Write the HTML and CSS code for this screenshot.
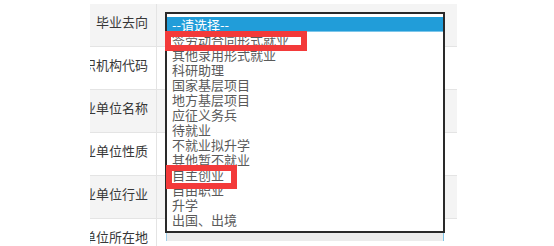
FILE: index.html
```html
<!DOCTYPE html>
<html lang="zh">
<head>
<meta charset="utf-8">
<link rel="stylesheet" href="styles.css">
</head>
<body>
<div class="page">
  <div class="form">
    <div class="row alt"><div class="label"><span>毕业去向</span></div><div class="value"></div></div>
    <div class="row"><div class="label"><span>组织机构代码</span></div><div class="value"></div></div>
    <div class="row alt"><div class="label"><span>就业单位名称</span></div><div class="value"></div></div>
    <div class="row"><div class="label"><span>就业单位性质</span></div><div class="value"></div></div>
    <div class="row alt"><div class="label"><span>就业单位行业</span></div><div class="value"></div></div>
    <div class="row"><div class="label"><span>就业单位所在地</span></div><div class="value"></div></div>
  </div>

  <div class="dropdown">
    <ul class="options">
      <li class="selected">--请选择--</li>
      <li>签劳动合同形式就业</li>
      <li>其他录用形式就业</li>
      <li>科研助理</li>
      <li>国家基层项目</li>
      <li>地方基层项目</li>
      <li>应征义务兵</li>
      <li>待就业</li>
      <li>不就业拟升学</li>
      <li>其他暂不就业</li>
      <li>自主创业</li>
      <li>自由职业</li>
      <li>升学</li>
      <li>出国、出境</li>
    </ul>
    <div class="under"></div>
  </div>

  <div class="mark mark-1"></div>
  <div class="mark mark-2"></div>
</div>
</body>
</html>
```

FILE: styles.css
```css
html, body {
  margin: 0;
  padding: 0;
  background: #ffffff;
  overflow: hidden;
}

body {
  width: 554px;
  height: 246px;
  font-family: "Noto Sans CJK SC", "Noto Sans", sans-serif;
  font-size: 13px;
}

.page {
  position: relative;
  width: 554px;
  height: 246px;
  overflow: hidden;
  padding: 4px 0 0 90px;
  box-sizing: border-box;
}

.form {
  width: 367px;
  display: flex;
  flex-direction: column;
}

.row {
  display: flex;
  flex: none;
  height: 43px;
  border-bottom: 1px solid #e4e4e4;
  box-sizing: border-box;
  background: #ffffff;
}

.row.alt {
  background: #f4f4f4;
}

.label {
  width: 67px;
  flex: none;
  display: flex;
  justify-content: flex-end;
  align-items: flex-start;
  overflow: hidden;
  white-space: nowrap;
  padding: 8px 8px 0 0;
  box-sizing: border-box;
  border-right: 1px solid #e4e4e4;
  color: #383838;
  line-height: 19px;
}

.label span {
  flex: none;
}

.value {
  flex: 1;
}

.dropdown {
  position: absolute;
  left: 165px;
  top: 12px;
  width: 280px;
}

.options {
  list-style: none;
  margin: 0;
  padding: 3px 0 2px 0;
  border: 2px solid #2a2a2a;
  background: #ffffff;
  height: 221px;
  box-sizing: border-box;
  color: #5a5a5a;
}

.options li {
  height: 15px;
  line-height: 15px;
  padding-left: 5px;
  white-space: nowrap;
}

.options li.selected {
  background: #219dd9;
  color: #ffffff;
  box-shadow: inset 0 -1px 0 #7cc6ea;
}

.under {
  height: 8px;
  margin: 0 1px;
  background: #ececec;
  border-left: 1px solid #9fd0ea;
  border-right: 1px solid #7fc4e6;
}

.mark {
  position: absolute;
  border: 6px solid #f33a3a;
  box-sizing: border-box;
}

.mark-1 {
  left: 165px;
  top: 31px;
  width: 142px;
  height: 20px;
}

.mark-2 {
  left: 166px;
  top: 165px;
  width: 71px;
  height: 24px;
}
```
